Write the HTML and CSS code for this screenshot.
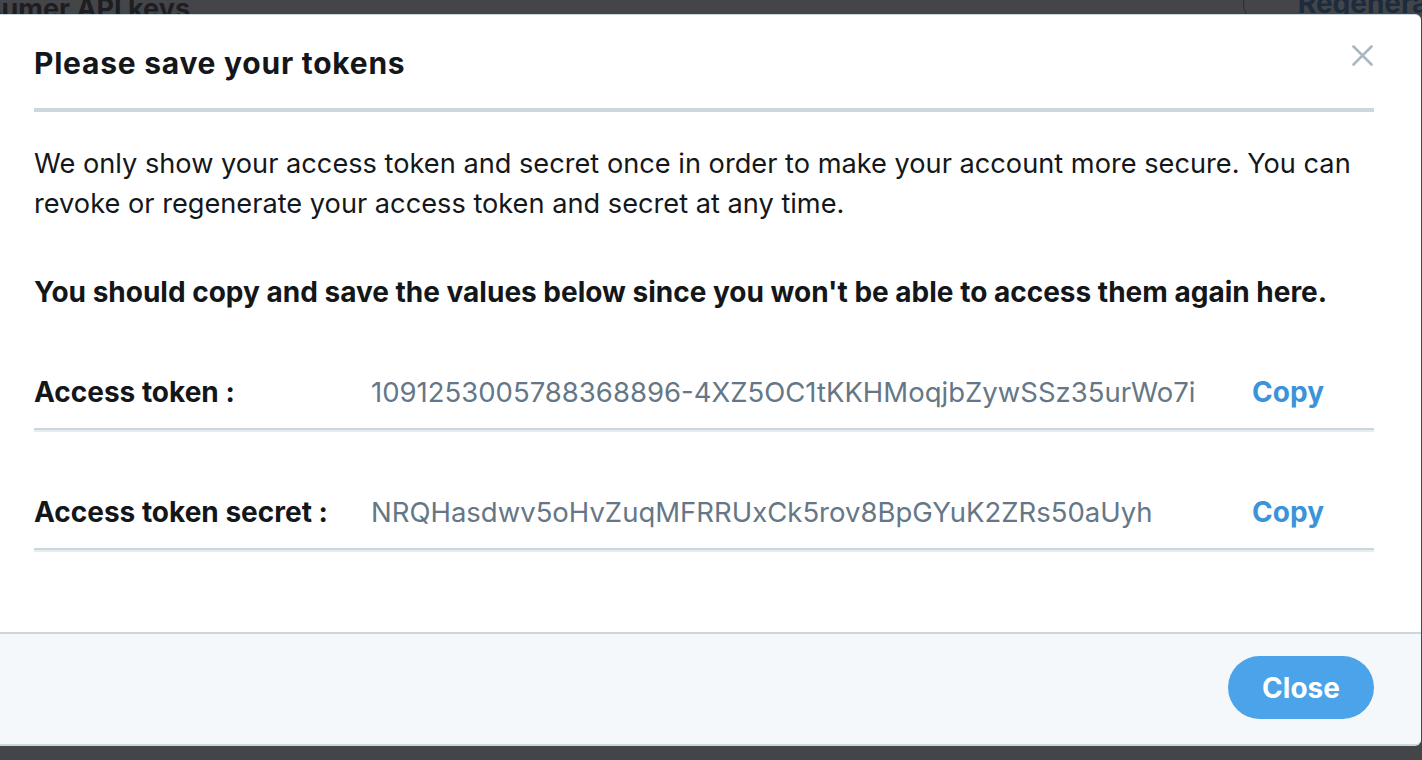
FILE: index.html
```html
<!DOCTYPE html>
<html lang="en">
<head>
<meta charset="utf-8">
<title>Please save your tokens</title>
<link rel="stylesheet" href="styles.css">
</head>
<body>
<div class="backdrop">
  <h2 class="backdrop-title">Consumer API keys</h2>
  <button class="backdrop-btn">Regenerate</button>
</div>

<div class="modal" role="dialog" aria-labelledby="modal-title">
  <div class="modal-header">
    <h1 id="modal-title" class="modal-title">Please save your tokens</h1>
    <button class="modal-x" aria-label="Close">
      <svg width="21" height="21" viewBox="0 0 21 21"><path d="M1.5 1.5 L19.5 19.5 M19.5 1.5 L1.5 19.5" stroke="#aab8c2" stroke-width="2.6" stroke-linecap="round" fill="none"/></svg>
    </button>
  </div>
  <div class="modal-body">
    <p class="intro">We only show your access token and secret once in order to make your account more secure. You can revoke or regenerate your access token and secret at any time.</p>
    <p class="warning">You should copy and save the values below since you won't be able to access them again here.</p>
    <div class="token-row">
      <div class="token-inner">
        <span class="token-label">Access token :</span>
        <span class="token-value">1091253005788368896-4XZ5OC1tKKHMoqjbZywSSz35urWo7i</span>
        <span class="token-copy">Copy</span>
      </div>
    </div>
    <div class="token-row">
      <div class="token-inner">
        <span class="token-label">Access token secret :</span>
        <span class="token-value">NRQHasdwv5oHvZuqMFRRUxCk5rov8BpGYuK2ZRs50aUyh</span>
        <span class="token-copy">Copy</span>
      </div>
    </div>
  </div>
  <div class="modal-footer">
    <button class="btn-close">Close</button>
  </div>
</div>
</body>
</html>
```
FILE: styles.css
```css
html, body {
  margin: 0;
  padding: 0;
}
body {
  width: 1422px;
  height: 760px;
  overflow: hidden;
  background: #444549;
  font-family: Inter, "Liberation Sans", Arial, sans-serif;
  position: relative;
}

.backdrop {
  display: flex;
  justify-content: space-between;
  align-items: flex-start;
  height: 14px;
  overflow: hidden;
}
.backdrop-title {
  margin: -9px 0 0 -67px;
  font-size: 27px;
  line-height: 36px;
  font-weight: 700;
  color: #1d1e21;
  white-space: nowrap;
}
.backdrop-btn {
  flex: none;
  margin: -21px -88px 0 0;
  height: 48px;
  padding: 0 54px;
  border: 1px solid #2a2d31;
  border-radius: 24px;
  background: transparent;
  font-family: inherit;
  font-size: 28px;
  font-weight: 700;
  color: #1c2b3d;
  white-space: nowrap;
}

.modal {
  position: absolute;
  top: 14px;
  left: 0;
  width: 1340px;
  padding: 0 47px 0 34px;
  background: #fff;
  border-top: 1px solid #ccd6dd;
  border-bottom: 2px solid #ccd6dd;
  border-radius: 0 6px 6px 0;
}

.modal-header {
  position: relative;
  padding-top: 31px;
  padding-bottom: 28px;
  border-bottom: 4px solid #ccd6dd;
}
.modal-title {
  margin: 0;
  font-size: 30px;
  line-height: 34px;
  letter-spacing: 0.75px;
  font-weight: 700;
  color: #14171a;
}
.modal-x {
  position: absolute;
  top: 30px;
  right: 1px;
  padding: 0;
  border: 0;
  background: none;
  width: 21px;
  height: 21px;
  display: block;
}
.modal-x svg {
  display: block;
}

.modal-body {
  padding: 32px 0 80px;
  color: #14171a;
}
.intro {
  margin: 0;
  font-size: 27.2px;
  line-height: 40px;
}
.warning {
  margin: 48px 0 0;
  font-size: 28px;
  line-height: 40px;
  font-weight: 700;
}

.token-row {
  margin-top: 40px;
  padding-top: 20px;
}
.token-row::after {
  content: "";
  display: block;
  height: 2px;
  background: #e6ecf0;
}
.token-inner {
  display: flex;
  align-items: center;
  line-height: 40px;
  padding-bottom: 16px;
  border-bottom: 2px solid #ccd6dd;
}
.token-label {
  width: 337px;
  flex: none;
  font-size: 28px;
  font-weight: 700;
  color: #14171a;
}
.token-value {
  flex: 1;
  font-size: 27.5px;
  color: #657786;
}
.token-copy {
  flex: none;
  margin-right: 50px;
  font-size: 28px;
  font-weight: 700;
  color: #3b94d9;
}

.modal-footer {
  margin: 0 -47px 0 -34px;
  padding: 22px 47px 25px 34px;
  background: #f5f8fa;
  border-top: 2px solid #ccd6dd;
  border-radius: 0 0 6px 0;
  display: flex;
  justify-content: flex-end;
}
.btn-close {
  width: 146px;
  height: 63px;
  border: 0;
  border-radius: 32px;
  background: #4ba3ea;
  color: #fff;
  font-family: inherit;
  font-size: 28px;
  font-weight: 700;
  padding: 0;
}
```
